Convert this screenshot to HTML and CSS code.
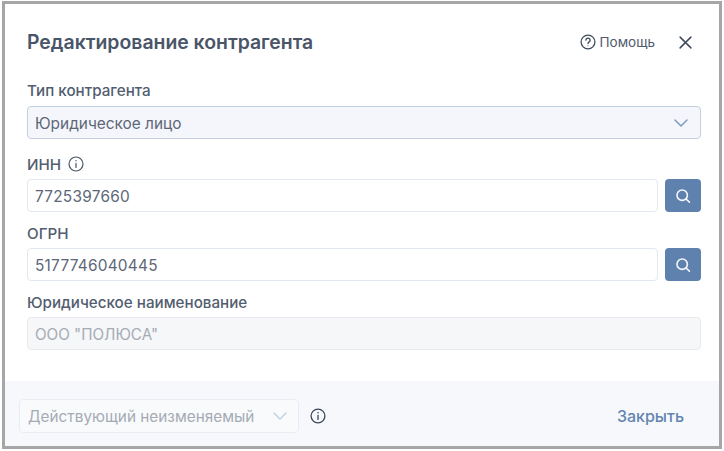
FILE: index.html
```html
<!DOCTYPE html>
<html lang="ru">
<head>
<meta charset="utf-8">
<title>Редактирование контрагента</title>
<link rel="stylesheet" href="styles.css">
</head>
<body>
<div class="dialog">
  <div class="content">
    <header class="head">
      <h1 class="title">Редактирование контрагента</h1>
      <div class="help">
        <svg class="help-icon" viewBox="0 0 16 16" fill="none" stroke="#3f4a5c" stroke-width="1.3" stroke-linecap="round"><circle cx="8" cy="8" r="6.9"/><path d="M5.9 6.2a2.1 2.1 0 1 1 3.3 1.7c-.8.5-1.2.9-1.2 1.7"/><circle cx="8" cy="11.8" r=".5" fill="#3f4a5c" stroke="none"/></svg>
        <span>Помощь</span>
      </div>
      <svg class="close" viewBox="0 0 14 14" fill="none" stroke="#3f4a5c" stroke-width="1.6" stroke-linecap="round"><path d="M1.2 1.2l11.6 11.6M12.8 1.2L1.2 12.8"/></svg>
    </header>
    <div class="label label-first">Тип контрагента</div>
    <div class="field select"><span>Юридическое лицо</span>
      <svg class="chev" viewBox="0 0 14 8" fill="none" stroke="#7d9cc0" stroke-width="1.5" stroke-linecap="round" stroke-linejoin="round"><path d="M1 1l6 6 6-6"/></svg>
    </div>
    <div class="label label-info"><span>ИНН</span>
      <svg class="info" viewBox="0 0 16 16" fill="none" stroke="#4a5568" stroke-width="1.2" stroke-linecap="round"><circle cx="8" cy="8" r="7"/><path d="M8 7.4v4"/><circle cx="8" cy="4.8" r=".7" fill="#4a5568" stroke="none"/></svg>
    </div>
    <div class="row">
      <div class="field num"><span>7725397660</span></div>
      <button class="search" type="button"><svg viewBox="0 0 16 16" fill="none" stroke="#f4f7fb" stroke-width="1.6" stroke-linecap="round"><circle cx="7.2" cy="7.2" r="5.2"/><path d="M11 11l3.4 3.2"/></svg></button>
    </div>
    <div class="label">ОГРН</div>
    <div class="row">
      <div class="field num"><span>5177746040445</span></div>
      <button class="search" type="button"><svg viewBox="0 0 16 16" fill="none" stroke="#f4f7fb" stroke-width="1.6" stroke-linecap="round"><circle cx="7.2" cy="7.2" r="5.2"/><path d="M11 11l3.4 3.2"/></svg></button>
    </div>
    <div class="label">Юридическое наименование</div>
    <div class="field disabled"><span>ООО "ПОЛЮСА"</span></div>
  </div>
  <footer class="foot">
    <div class="status"><span>Действующий неизменяемый</span>
      <svg class="chev" viewBox="0 0 14 8" fill="none" stroke="#c3d0e0" stroke-width="1.5" stroke-linecap="round" stroke-linejoin="round"><path d="M1 1l6 6 6-6"/></svg>
    </div>
    <svg class="foot-info" viewBox="0 0 16 16" fill="none" stroke="#3a4556" stroke-width="1.3" stroke-linecap="round"><circle cx="8" cy="8" r="6.9"/><path d="M8 7.4v4"/><circle cx="8" cy="4.8" r=".8" fill="#3a4556" stroke="none"/></svg>
    <div class="close-btn">Закрыть</div>
  </footer>
</div>
</body>
</html>
```
FILE: styles.css
```css
* { box-sizing: border-box; }
html, body { margin: 0; padding: 0; background: #fff; }
body { width: 724px; height: 451px; overflow: hidden; font-family: Inter, "Liberation Sans", sans-serif; color: #4a5568; }
.dialog { width: 720px; height: 448px; margin: 1px 0 0 2px; border: 3px solid #a6a6a6; display: flex; flex-direction: column; background: #fff; }
.content { flex: 1; padding: 0 18px 0 22px; }
.head { display: flex; align-items: center; height: 76px; }
.title { margin: 0; flex: 1; font-size: 19.4px; font-weight: 600; color: #4a5568; }
.help { display: flex; align-items: center; gap: 4px; font-size: 13.5px; color: #4f5a6c; }
.help-icon { width: 16px; height: 16px; }
.close { width: 13px; height: 13px; margin-left: 24px; margin-right: 9px; }
.label { font-size: 15.2px; font-weight: 500; line-height: 20px; height: 25px; padding-top: 1px; color: #525d6f; }
.label-first { height: 26px; }
.label-info { display: flex; align-items: flex-start; gap: 7px; margin-top: 15px; }
.info { width: 16px; height: 16px; margin-top: 1px; }
.field { height: 33px; flex: 1; display: flex; align-items: center; padding: 1px 7px 0; border: 1px solid #e2e8f0; border-radius: 4px; font-size: 15.4px; color: #5d6778; background: #fff; }
.num { letter-spacing: .25px; }
.select { justify-content: space-between; background: #f4f6fb; border-color: #c3d0e0; padding-right: 12px; }
.chev { width: 14px; height: 8px; }
.row { display: flex; gap: 7px; height: 33px; margin-bottom: 11px; }
.search { width: 36px; height: 33px; border: 0; padding: 0; border-radius: 4px; background: #5f81ad; display: flex; align-items: center; justify-content: center; }
.search svg { width: 16px; height: 16px; }
.disabled { background: #f6f7f8; color: #a5abb5; font-size: 15.2px; border-color: #e8eaee; }
.foot { height: 65px; display: flex; align-items: center; padding: 5px 35px 0 14px; background: #f6f8fb; }
.status { width: 280px; height: 34px; display: flex; align-items: center; justify-content: space-between; padding: 0 11px 0 8px; border: 1px solid #e8edf3; border-radius: 4px; font-size: 15.35px; color: #a5abb5; background: #f9fafc; }
.foot-info { width: 16px; height: 16px; margin-left: 11px; }
.close-btn { margin-left: auto; font-size: 16px; font-weight: 500; color: #6484b0; }
```
